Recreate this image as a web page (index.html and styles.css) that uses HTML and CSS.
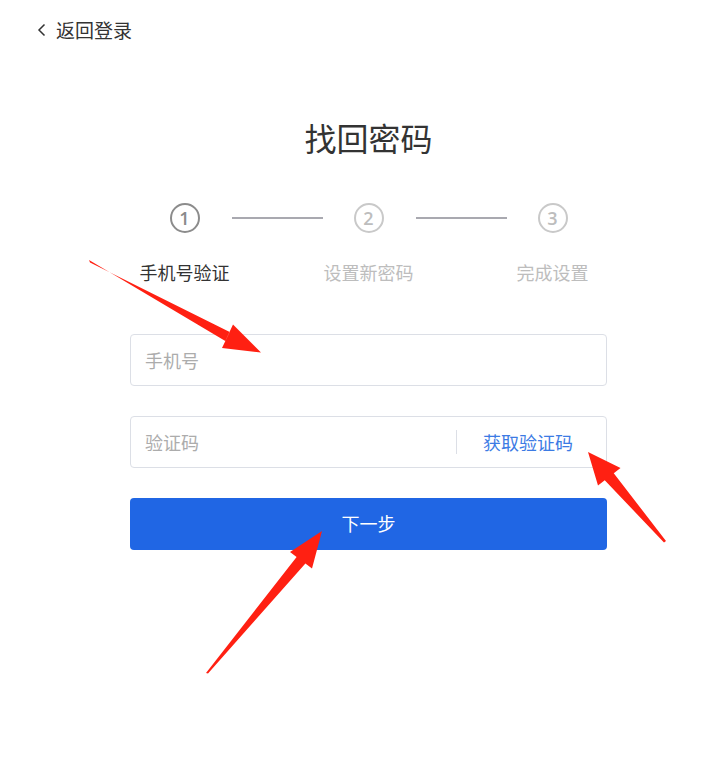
FILE: index.html
```html
<!DOCTYPE html>
<html lang="zh-CN">
<head>
<meta charset="utf-8">
<title>找回密码</title>
<link rel="stylesheet" href="styles.css">
</head>
<body>
<div class="page">
  <div class="back">
    <svg class="back-icon" width="12" height="14" viewBox="0 0 12 14"><path d="M8.5 1.5 L3 7 L8.5 12.5" fill="none" stroke="#333" stroke-width="1.5"/></svg>
    <span class="back-text">返回登录</span>
  </div>
  <main class="main">
    <h1 class="title">找回密码</h1>
    <div class="steps">
      <span class="circle active">1</span>
      <span class="line"></span>
      <span class="circle">2</span>
      <span class="line"></span>
      <span class="circle">3</span>
    </div>
    <div class="labels">
      <span class="label active">手机号验证</span>
      <span class="label">设置新密码</span>
      <span class="label">完成设置</span>
    </div>
    <div class="field">
      <input class="input" type="text" placeholder="手机号">
    </div>
    <div class="field code">
      <input class="input" type="text" placeholder="验证码">
      <span class="divider"></span>
      <span class="get-code">获取验证码</span>
    </div>
    <button class="btn">下一步</button>
  </main>
  <svg class="arrows" width="720" height="762" viewBox="0 0 720 762">
    <polygon fill="#ff2012" points="89,260 90,262.5 229.7,331.9 222,348 261,352.5 233,324.5 225.3,341.1"/>
    <polygon fill="#ff2012" points="666,541 664,542.5 604.75,480.25 598,485.5 588,452 620.5,468 613.75,473.25"/>
    <polygon fill="#ff2012" points="206,673 208,673.5 305.4,563.5 312,568.5 322,531 290,552 296.6,557"/>
  </svg>
</div>
</body>
</html>
```
FILE: styles.css
```css
* { box-sizing: border-box; }
html, body { margin: 0; padding: 0; background: #fff; }
body {
  font-family: "Noto Sans CJK SC", "Noto Sans", sans-serif;
  color: #333;
}
.page {
  position: relative;
  width: 720px;
  height: 762px;
  overflow: hidden;
}
.back {
  display: flex;
  align-items: center;
  gap: 8px;
  padding: 18px 0 0 36px;
  height: 42px;
}
.back-icon { display: block; }
.back-text {
  font-size: 19px;
  line-height: 24px;
  color: #333;
}
.main {
  width: 477px;
  margin-left: 130px;
  display: flex;
  flex-direction: column;
  align-items: center;
}
.title {
  margin: 73px 0 0;
  font-size: 32px;
  line-height: 44px;
  font-weight: 400;
  color: #333;
}
.steps {
  margin-top: 44px;
  display: flex;
  align-items: center;
  height: 30px;
}
.circle {
  width: 30px;
  height: 30px;
  border-radius: 50%;
  border: 2px solid #c9c9c9;
  color: #bdbdbd;
  display: flex;
  align-items: center;
  justify-content: center;
  font-family: "Open Sans", "Noto Sans", sans-serif;
  font-size: 18px;
  font-weight: 600;
  line-height: 1;
}
.circle.active {
  border-color: #8c8c8c;
  color: #8a8a8a;
}
.line {
  width: 91px;
  height: 2px;
  background: #a9a9b0;
  margin: 0 31px 0 32px;
}
.labels {
  margin-top: 27px;
  width: 552px;
  flex-shrink: 0;
  display: flex;
}
.label {
  width: 184px;
  text-align: center;
  font-size: 18px;
  line-height: 24px;
  color: #bdbdbd;
}
.label.active { color: #333; }
.field {
  width: 477px;
  height: 52px;
  border: 1px solid #dcdfe6;
  border-radius: 4px;
  display: flex;
  align-items: center;
  margin-top: 50px;
}
.field.code { margin-top: 30px; }
.input {
  flex: 1;
  min-width: 0;
  height: 100%;
  border: 0;
  outline: 0;
  background: transparent;
  padding: 0 14px;
  font-family: "Noto Sans CJK SC", "Noto Sans", sans-serif;
  font-size: 18px;
  color: #333;
}
.input::placeholder { color: #acacac; }
.divider {
  width: 1px;
  height: 24px;
  background: #dcdfe6;
}
.get-code {
  padding: 0 33px 0 26px;
  font-size: 18px;
  line-height: 24px;
  color: #3c7be4;
}
.btn {
  margin-top: 30px;
  width: 477px;
  height: 52px;
  border: 0;
  border-radius: 4px;
  background: #2066e4;
  color: #fff;
  font-family: "Noto Sans CJK SC", "Noto Sans", sans-serif;
  font-size: 18px;
  padding: 0 0 2px;
}
.arrows {
  position: absolute;
  left: 0;
  top: 0;
  pointer-events: none;
}
```
